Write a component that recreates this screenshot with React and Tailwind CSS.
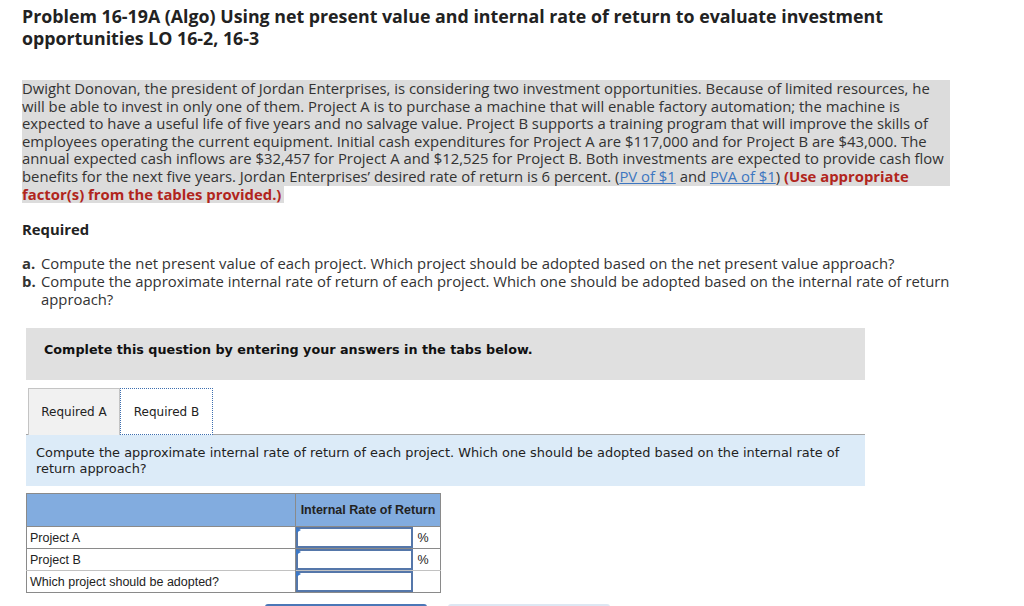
import React from 'react';

const body = { fontFamily: '"Open Sans", Lato, sans-serif' };
const verdana = { fontFamily: '"DejaVu Sans", Verdana, sans-serif' };
const arial = { fontFamily: '"Liberation Sans", Arial, sans-serif' };

function AnswerInput() {
  return (
    <div className="relative h-[21px] border-2 border-[#5577aa] bg-white">
      {/* small flag in the corner */}
      <span className="absolute -left-[2px] -top-[2px] h-0 w-0 border-y-[3px] border-l-[5px] border-y-transparent border-l-[#3b78c8]"></span>
    </div>
  );
}

export default function App() {
  const rows = [
    { label: 'Project A', unit: '%' },
    { label: 'Project B', unit: '%' },
    { label: 'Which project should be adopted?', unit: '' },
  ];

  return (
    <div className="min-h-screen bg-white pl-[22px] pt-[5px] text-[#333]" style={body}>
      {/* Title */}
      <h1 className="w-[900px] text-[17.8px] font-bold leading-[22px] text-[#222]">
        Problem 16-19A (Algo) Using net present value and internal rate of return to evaluate investment opportunities LO 16-2, 16-3
      </h1>

      {/* Problem text - highlighted block, last line only behind its text */}
      <div className="mt-[31px] w-[970px] bg-[linear-gradient(#dcdcdc,#dcdcdc),linear-gradient(#dcdcdc,#dcdcdc)] bg-[length:928px_106px,262px_17px] bg-[position:0_0,0_106px] bg-no-repeat text-[14.85px] leading-[17.6px]">
        Dwight Donovan, the president of Jordan Enterprises, is considering two investment opportunities. Because of limited resources, he<br />
        will be able to invest in only one of them. Project A is to purchase a machine that will enable factory automation; the machine is<br />
        expected to have a useful life of five years and no salvage value. Project B supports a training program that will improve the skills of<br />
        employees operating the current equipment. Initial cash expenditures for Project A are $117,000 and for Project B are $43,000. The<br />
        annual expected cash inflows are $32,457 for Project A and $12,525 for Project B. Both investments are expected to provide cash flow<br />
        benefits for the next five years. Jordan Enterprises’ desired rate of return is 6 percent. (<a href="#" className="text-[#3d76c0] underline">PV of $1</a> and{' '}
        <a href="#" className="text-[#3d76c0] underline">PVA of $1</a>){' '}
        <span className="font-bold text-[#b1251c]">(Use appropriate<br />factor(s) from the tables provided.)</span>
      </div>

      {/* Required */}
      <div className="mt-[17px] text-[14.85px] font-bold leading-[18px] text-[#222]">Required</div>
      <ol className="mt-[16px] w-[940px] text-[14.85px] leading-[18px]">
        <li className="flex">
          <span className="w-[19px] shrink-0 font-bold">a.</span>
          <span>Compute the net present value of each project. Which project should be adopted based on the net present value approach?</span>
        </li>
        <li className="flex">
          <span className="w-[19px] shrink-0 font-bold">b.</span>
          <span>Compute the approximate internal rate of return of each project. Which one should be adopted based on the internal rate of return approach?</span>
        </li>
      </ol>

      {/* Tabs area */}
      <div className="ml-[4px] mt-[20px] w-[839px]" style={verdana}>
        <div className="flex h-[52px] items-start bg-[#e0e0e0] pl-[18px] pt-[14px] text-[12.75px] font-bold leading-[16px] text-[#111]">
          Complete this question by entering your answers in the tabs below.
        </div>

        <div className="mt-[8px] flex border-b border-[#a6a6a6] pl-[2px] text-[12px] text-[#222]">
          <button className="-mb-px flex h-[47px] w-[92px] items-center justify-center border border-b-0 border-[#c4c4c4] bg-[#f1f1f1]">
            Required A
          </button>
          <button className="-mb-px flex h-[47px] w-[93px] items-center justify-center border border-dotted border-[#3e6fb0] bg-white">
            Required B
          </button>
        </div>

        <div className="bg-[#dcebf8] px-[10px] pb-[9px] pt-[10px] text-[12.9px] leading-[16px] text-[#222]">
          Compute the approximate internal rate of return of each project. Which one should be adopted based on the internal rate of return approach?
        </div>

        {/* Answer table */}
        <table className="mt-[7px] w-[415px] border-collapse border border-[#8a8a8a] text-[12.5px] text-[#222]" style={arial}>
          <thead>
            <tr className="h-[33px] bg-[#82acdf]">
              <th className="w-[269px] border border-[#8a8a8a]"></th>
              <th colSpan={2} className="border border-[#8a8a8a] px-[2px] text-center font-bold">
                Internal Rate of Return
              </th>
            </tr>
          </thead>
          <tbody>
            {rows.map((row, i) => (
              <tr key={row.label} className={`h-[22px] ${i === 2 ? 'border-t border-[#c2c2c2]' : 'border-t border-[#8a8a8a]'}`}>
                <td className="border-r border-[#8a8a8a] px-[3px] py-0 leading-[14px]">{row.label}</td>
                <td className="w-[117px] p-0">
                  <AnswerInput />
                </td>
                <td className="w-[28px] px-[5px] py-0 leading-[14px]">{row.unit}</td>
              </tr>
            ))}
          </tbody>
        </table>

        {/* Navigation buttons */}
        <div className="ml-[239px] mt-[11px] flex gap-[21px]">
          <button className="h-[34px] w-[162px] rounded-t-[3px] bg-[#4b77b7]"></button>
          <button className="h-[34px] w-[162px] rounded-t-[3px] bg-[#dde7f3]"></button>
        </div>
      </div>
    </div>
  );
}
